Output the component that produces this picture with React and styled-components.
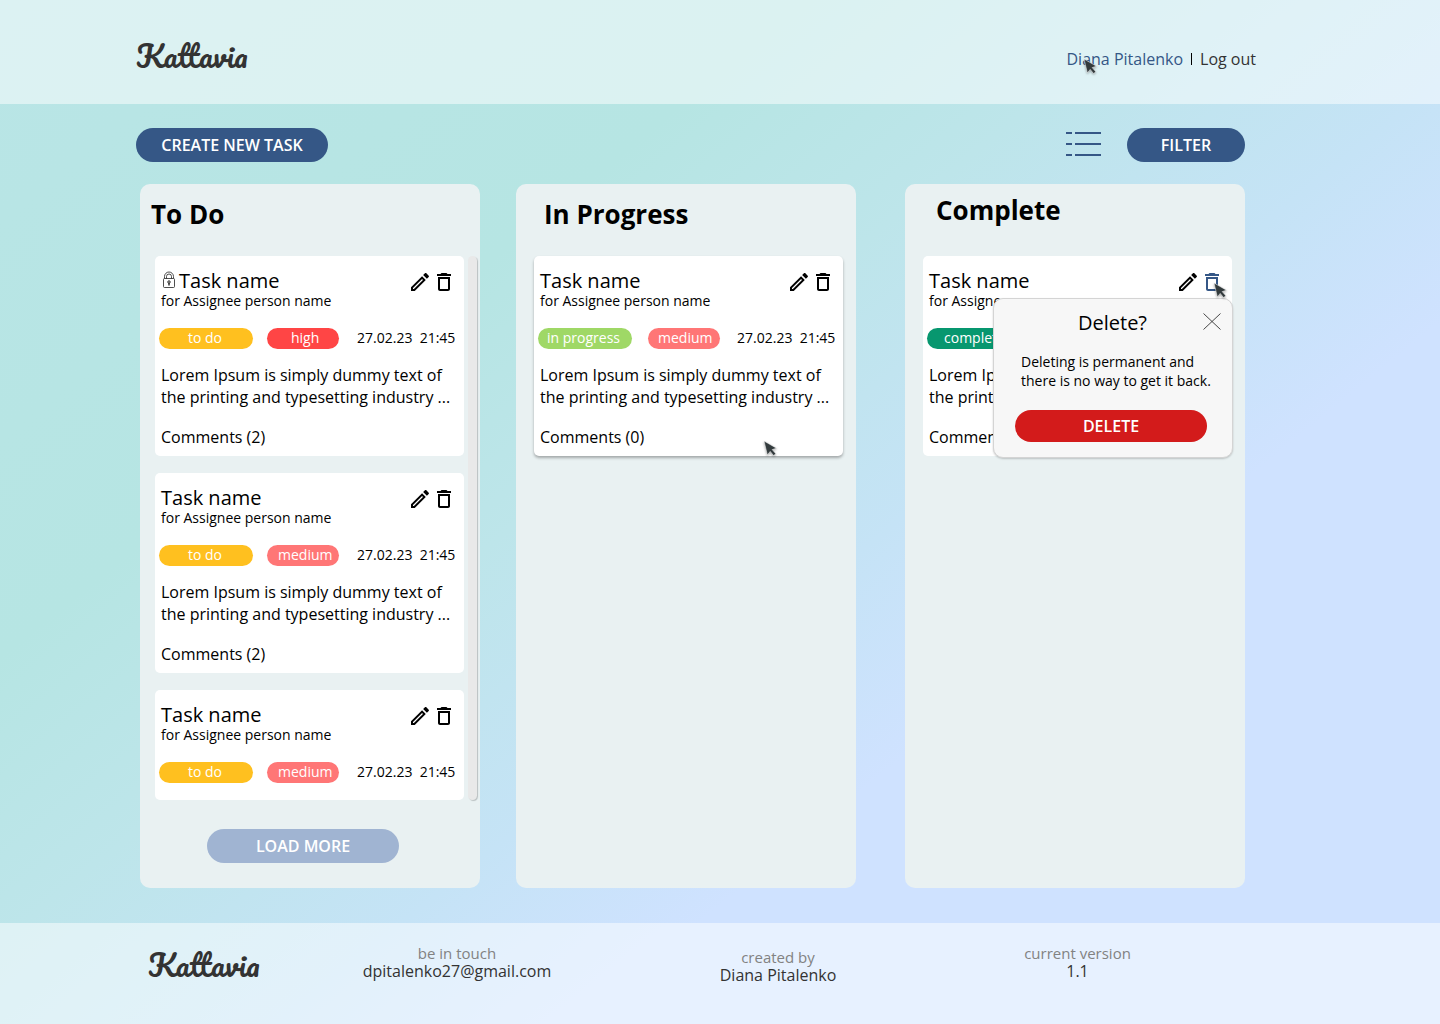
import React from 'react';
import styled, { createGlobalStyle } from 'styled-components';

const Global = createGlobalStyle`
  *, *::before, *::after { box-sizing: border-box; }
  body {
    margin: 0;
    font-family: "Open Sans", "Noto Sans", sans-serif;
    font-size: 16px;
    line-height: 22px;
    color: #000;
  }
  h1, h2, h3, p { margin: 0; font-weight: 400; }
  button { font: inherit; border: 0; padding: 0; background: none; cursor: pointer; color: inherit; }
  a { color: inherit; text-decoration: none; }
`;

const Page = styled.div`
  min-height: 100vh;
  display: flex;
  flex-direction: column;
  background: linear-gradient(141deg, #b9e5e6 0%, #b6e5e3 30%, #bde5ea 43%, #c5e3f6 57%, #cfe2ff 68%, #cfe2ff 100%);
`;

const Header = styled.header`
  display: flex;
  align-items: center;
  justify-content: space-between;
  height: 104px;
  padding: 0 184px 0 136px;
  background: rgba(255, 255, 255, 0.5);
`;

const Logo = styled.a`
  font-family: Pacifico, "Liberation Serif", cursive;
  font-size: 30px;
  font-weight: 400;
  line-height: 40px;
  color: #333;
  margin-top: 8px;
`;

const Account = styled.nav`
  display: flex;
  align-items: center;
  gap: 8px;
  margin-top: 14px;
  color: #333;
`;

const UserLink = styled.a`
  position: relative;
  color: #355786;
`;

const Divider = styled.span`
  width: 1px;
  height: 12px;
  background: #000;
`;

const Main = styled.main`
  flex: 1;
  padding: 24px 195px 35px 140px;
`;

const Toolbar = styled.div`
  display: flex;
  align-items: center;
  gap: 26px;
  margin: 0 0 22px -4px;
`;

const PillButton = styled.button`
  width: ${(p) => p.$width || 192}px;
  height: ${(p) => p.$height || 34}px;
  border-radius: 17px;
  background: ${(p) => p.$color || '#355786'};
  color: #fff;
  font-weight: 600;
`;

const IconButton = styled.button`
  position: relative;
  display: flex;
  color: ${(p) => p.$color || '#000'};
  margin-left: ${(p) => (p.$push ? 'auto' : '0')};
`;

const Board = styled.div`
  display: grid;
  grid-template-columns:
    minmax(0, 340fr) minmax(0, 36fr) minmax(0, 340fr) minmax(0, 49fr) minmax(0, 340fr);
`;

const Column = styled.section`
  grid-column: ${(p) => p.$slot};
  min-height: 704px;
  border-radius: 10px;
  background: #e9f1f2;
  display: flex;
  flex-direction: column;
`;

const ColumnTitle = styled.h2`
  height: 72px;
  padding: ${(p) => (p.$raised ? 8 : 12)}px 0 0 ${(p) => p.$indent}px;
  font-size: 26px;
  line-height: 36px;
  font-weight: 700;
`;

const Lane = styled.div`
  display: flex;
  gap: 4px;
  padding: 0 ${(p) => p.$right}px 0 ${(p) => p.$left}px;
`;

const CardList = styled.div`
  flex: 1;
  min-width: 0;
  display: flex;
  flex-direction: column;
  gap: 17px;
`;

const ScrollThumb = styled.div`
  flex: none;
  width: 9px;
  border-radius: 5px;
  background: #e9e9e9;
  box-shadow: 1px 1px 1px rgba(0, 0, 0, 0.2);
`;

const Card = styled.article`
  position: relative;
  height: ${(p) => (p.$short ? 110 : 200)}px;
  padding: 14px 8px 0 6px;
  border-radius: 5px;
  background: #fff;
  box-shadow: ${(p) => (p.$hovered ? '0 2px 3px rgba(0, 0, 0, 0.3)' : 'none')};
`;

const CardHead = styled.div`
  display: flex;
  align-items: flex-start;
  height: 22px;
`;

const CardTitle = styled.h3`
  flex: 1;
  display: flex;
  align-items: center;
  gap: 2px;
  font-size: 20px;
  line-height: 22px;
`;

const Actions = styled.div`
  display: flex;
`;

const Assignee = styled.p`
  font-size: 14px;
  line-height: 18px;
`;

const MetaRow = styled.div`
  display: flex;
  align-items: flex-start;
  height: 21px;
  margin: 18px 0 0 -2px;
  font-size: 14px;
  line-height: 20px;
`;

const Badge = styled.span`
  flex: none;
  width: ${(p) => p.$width}px;
  height: 21px;
  padding-left: ${(p) => p.$inset}px;
  margin-right: ${(p) => p.$gap}px;
  border-radius: 11px;
  background: ${(p) => p.$color};
  color: #fff;
`;

const Stamp = styled.time`
  white-space: pre;
`;

const Summary = styled.p`
  margin: 15px 0 18px;
  white-space: nowrap;
`;

const Footer = styled.footer`
  min-height: 101px;
  padding: 0 224px 0 148px;
  display: grid;
  grid-template-columns: 149fr 320fr 322fr 277fr;
  align-items: start;
  background: rgba(255, 255, 255, 0.5);
`;

const FooterLogo = styled(Logo)`
  margin-top: 22px;
`;

const FooterItem = styled.div`
  padding-top: ${(p) => (p.$lowered ? 25 : 21)}px;
  text-align: center;
  line-height: 18px;
  color: #333;
`;

const FooterLabel = styled.p`
  font-size: 15px;
  color: #828282;
`;

const LoadRow = styled.div`
  display: flex;
  justify-content: center;
  padding: 29px 14px 0 0;
`;

const Popover = styled.div`
  position: absolute;
  z-index: 1;
  top: 42px;
  right: -1px;
  width: 240px;
  height: 160px;
  padding: 13px 22px 0 21px;
  border: 1px solid #d4d4d4;
  border-radius: 10px;
  background: #f7f7f7;
  box-shadow: 0 1px 2px rgba(0, 0, 0, 0.2);
`;

const PopoverTitle = styled.h3`
  font-size: 20px;
  line-height: 22px;
  text-align: center;
`;

const PopoverText = styled.p`
  margin: 18px -6px 20px 6px;
  font-size: 14px;
  line-height: 19px;
`;

const CloseButton = styled(IconButton)`
  position: absolute;
  top: 14px;
  right: 11px;
`;

const Pointer = styled.svg`
  position: absolute;
  z-index: 2;
  left: ${(p) => p.$x}px;
  top: ${(p) => p.$y}px;
  pointer-events: none;
  filter: drop-shadow(0 1px 1px rgba(0, 0, 0, 0.35));
`;

const Cursor = ({ x, y }) => (
  <Pointer $x={x} $y={y} width="16" height="18" viewBox="0 0 16 18" aria-hidden="true">
    <path d="M1 1L13.500 8.200L9.200 9.600L12.800 13.800L10.600 15.600L7.200 11.400L4.400 15Z" fill="#333b3d" stroke="#fff" strokeWidth="0.500" />
  </Pointer>
);

const PencilIcon = () => (
  <svg width="24" height="24" viewBox="0 0 24 24" fill="currentColor" aria-hidden="true">
    <path d="M14.06 9.02l.92.92L5.92 19H5v-.92l9.06-9.06M17.66 3c-.25 0-.51.1-.7.29l-1.83 1.83 3.75 3.75 1.83-1.83c.39-.39.39-1.02 0-1.41l-2.34-2.34c-.2-.2-.45-.29-.71-.29zm-3.6 3.19L3 17.25V21h3.75L17.81 9.94l-3.75-3.75z" />
  </svg>
);

const TrashIcon = () => (
  <svg width="24" height="24" viewBox="0 0 24 24" fill="currentColor" aria-hidden="true">
    <path fillRule="evenodd" d="M6 19c0 1.100.9 2 2 2h8c1.100 0 2-.9 2-2V7H6v12zM8 9h8v10H8V9zm7.500-5l-1-1h-5l-1 1H5v2h14V4h-3.500z" />
  </svg>
);

const LockIcon = () => (
  <svg width="16" height="20" viewBox="0 0 16 20" fill="none" stroke="#222" strokeWidth="0.800" aria-label="Private">
    <rect x="2.500" y="7.500" width="11" height="9" rx="1" />
    <path d="M3.500 7.500V5.500a4.500 4.500 0 0 1 9 0V7.500M5.500 7.500V5.500a2.500 2.500 0 0 1 5 0V7.500" />
    <circle cx="8" cy="11" r="1.200" strokeWidth="1" />
    <path d="M8 12v2.500" strokeWidth="1.400" />
  </svg>
);

const ListIcon = () => (
  <svg width="35" height="26" viewBox="0 0 35 26" stroke="#355786" strokeWidth="2" aria-hidden="true">
    <path d="M0 1h6M9 1h26M0 12h6M9 12h26M0 23h6M9 23h26" />
  </svg>
);

const CloseIcon = () => (
  <svg width="18" height="18" viewBox="0 0 18 18" stroke="#333" strokeWidth="0.900" aria-hidden="true">
    <path d="M0.500 0.500L17.500 16.500M17.500 0.500L0.500 16.500" />
  </svg>
);

const STATUS = {
  todo: { label: 'to do', color: '#ffc01f', inset: 29 },
  progress: { label: 'in progress', color: '#9fd866', inset: 9 },
  complete: { label: 'complete', color: '#07976f', inset: 17 },
};

const PRIORITY = {
  high: { label: 'high', color: '#ff4545', inset: 24 },
  medium: { label: 'medium', color: '#ff7676', inset: 11 },
};

function TaskCard({ status, priority, comments, locked, short, hovered, confirming }) {
  const state = STATUS[status];
  const level = PRIORITY[priority];
  const wide = status !== 'todo';
  return (
    <Card $short={short} $hovered={hovered}>
      <CardHead>
        <CardTitle>
          {locked && <LockIcon />}
          Task name
        </CardTitle>
        <Actions>
          <IconButton aria-label="Edit task"><PencilIcon /></IconButton>
          <IconButton aria-label="Delete task" $color={confirming ? '#355786' : '#000'}>
            <TrashIcon />
            {confirming && <Cursor x={13} y={12} />}
          </IconButton>
        </Actions>
      </CardHead>
      <Assignee>for Assignee person name</Assignee>
      <MetaRow>
        <Badge $width={94} $inset={state.inset} $gap={wide ? 16 : 14} $color={state.color}>{state.label}</Badge>
        <Badge $width={72} $inset={wide ? 10 : level.inset} $gap={wide ? 17 : 18} $color={level.color}>{level.label}</Badge>
        <Stamp dateTime="2023-02-27T21:45">{'27.02.23  21:45'}</Stamp>
      </MetaRow>
      {!short && (
        <>
          <Summary>Lorem Ipsum is simply dummy text of<br />the printing and typesetting industry ...</Summary>
          <p>Comments ({comments})</p>
        </>
      )}
      {hovered && <Cursor x={229} y={184} />}
      {confirming && (
        <Popover role="dialog" aria-label="Delete?">
          <PopoverTitle>Delete?</PopoverTitle>
          <CloseButton aria-label="Close"><CloseIcon /></CloseButton>
          <PopoverText>Deleting is permanent and<br />there is no way to get it back.</PopoverText>
          <PillButton $height={32} $color="#d31b1b">DELETE</PillButton>
        </Popover>
      )}
    </Card>
  );
}

export default function App() {
  return (
    <Page>
      <Global />
      <Header>
        <Logo href="#">Kattavia</Logo>
        <Account>
          <UserLink href="#profile">
            Diana Pitalenko
            <Cursor x={16} y={10} />
          </UserLink>
          <Divider />
          <a href="#logout">Log out</a>
        </Account>
      </Header>
      <Main>
        <Toolbar>
          <PillButton>CREATE NEW TASK</PillButton>
          <IconButton $push aria-label="List view"><ListIcon /></IconButton>
          <PillButton $width={118}>FILTER</PillButton>
        </Toolbar>
        <Board>
          <Column $slot={1}>
            <ColumnTitle $indent={11}>To Do</ColumnTitle>
            <Lane $left={15} $right={3}>
              <CardList>
                <TaskCard status="todo" priority="high" comments={2} locked />
                <TaskCard status="todo" priority="medium" comments={2} />
                <TaskCard status="todo" priority="medium" short />
              </CardList>
              <ScrollThumb />
            </Lane>
            <LoadRow>
              <PillButton $color="#a0b4d2">LOAD MORE</PillButton>
            </LoadRow>
          </Column>
          <Column $slot={3}>
            <ColumnTitle $indent={28}>In Progress</ColumnTitle>
            <Lane $left={18} $right={13}>
              <CardList>
                <TaskCard status="progress" priority="medium" comments={0} hovered />
              </CardList>
            </Lane>
          </Column>
          <Column $slot={5}>
            <ColumnTitle $indent={31} $raised>Complete</ColumnTitle>
            <Lane $left={18} $right={13}>
              <CardList>
                <TaskCard status="complete" priority="medium" comments={0} confirming />
              </CardList>
            </Lane>
          </Column>
        </Board>
      </Main>
      <Footer>
        <FooterLogo href="#">Kattavia</FooterLogo>
        <FooterItem>
          <FooterLabel>be in touch</FooterLabel>
          <a href="mailto:dpitalenko27@gmail.com">dpitalenko27@gmail.com</a>
        </FooterItem>
        <FooterItem $lowered>
          <FooterLabel>created by</FooterLabel>
          <p>Diana Pitalenko</p>
        </FooterItem>
        <FooterItem>
          <FooterLabel>current version</FooterLabel>
          <p>1.1</p>
        </FooterItem>
      </Footer>
    </Page>
  );
}
